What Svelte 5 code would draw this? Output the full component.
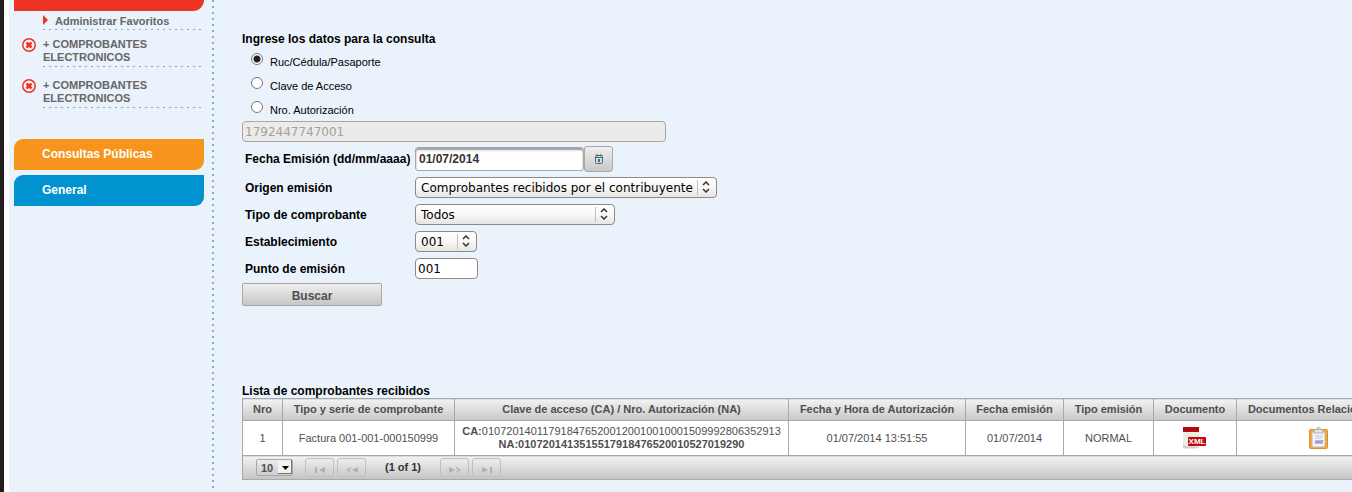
<script>
    let searchBy = 'ruc';
    let ruc = '1792447747001';
    let issueDate = '01/07/2014';
    let emissionPoint = '001';

    const favorites = [
        { id: 1, title: '+ COMPROBANTES ELECTRONICOS' },
        { id: 2, title: '+ COMPROBANTES ELECTRONICOS' },
    ];

    const searchOptions = [
        { value: 'ruc', display: 'Ruc/Cédula/Pasaporte' },
        { value: 'clave', display: 'Clave de Acceso' },
        { value: 'autorizacion', display: 'Nro. Autorización' },
    ];

    const columns = [
        { display: 'Nro', width: 40 },
        { display: 'Tipo y serie de comprobante', width: 172 },
        { display: 'Clave de acceso (CA) / Nro. Autorización (NA)', width: 334 },
        { display: 'Fecha y Hora de Autorización', width: 177 },
        { display: 'Fecha emisión', width: 98 },
        { display: 'Tipo emisión', width: 90 },
        { display: 'Documento', width: 83 },
        { display: 'Documentos Relacionados', width: 164 },
    ];

    const receipts = [
        {
            nro: 1,
            serie: 'Factura 001-001-000150999',
            ca: '0107201401179184765200120010010001509992806352913',
            na: '0107201413515517918476520010527019290',
            authorized: '01/07/2014 13:51:55',
            issued: '01/07/2014',
            type: 'NORMAL',
        },
    ];
</script>

<div class="page">
    <aside class="sidebar">
        <div class="tab red"></div>
        <ul class="favorites">
            <li class="manage"><a href="#favoritos">Administrar Favoritos</a></li>
            {#each favorites as favorite (favorite.id)}
                <li class="favorite">
                    <button class="remove" aria-label="Quitar favorito">
                        <svg width="14" height="14" viewBox="0 0 14 14">
                            <circle cx="7" cy="7" r="6.2" fill="#fff" stroke="#ee3224" stroke-width="1.5" />
                            <path d="M4.5 4.5l5 5M9.5 4.5l-5 5" stroke="#ee3224" stroke-width="2.6" />
                        </svg>
                    </button>
                    <a href="#comprobantes">{favorite.title}</a>
                </li>
            {/each}
        </ul>
        <nav>
            <a class="tab orange" href="#consultas">Consultas Públicas</a>
            <a class="tab blue" href="#general">General</a>
        </nav>
    </aside>

    <main>
        <form on:submit|preventDefault>
            <fieldset>
                <legend>Ingrese los datos para la consulta</legend>
                {#each searchOptions as option}
                    <label class="option">
                        <input type="radio" name="searchBy" value={option.value} bind:group={searchBy} />
                        <span>{option.display}</span>
                    </label>
                {/each}
            </fieldset>
            <input class="text ruc" aria-label="Ruc/Cédula/Pasaporte" bind:value={ruc} disabled />

            <div class="fields">
                <label for="fecha">Fecha Emisión (dd/mm/aaaa)</label>
                <div class="date">
                    <input id="fecha" bind:value={issueDate} />
                    <button type="button" aria-label="Abrir calendario">
                        <svg width="8" height="10" viewBox="0 0 8 10">
                            <path d="M0.5 2.5v6q0 1 1 1h5q1 0 1-1v-6q0-1-1-1h-5q-1 0-1 1zM2 0v2.5M6 0v2.5M1 3.5h6" fill="none" stroke="#3f6b80" />
                            <rect x="3" y="5" width="2" height="3" fill="#3f6b80" />
                        </svg>
                    </button>
                </div>

                <label for="origen">Origen emisión</label>
                <div class="select origen">
                    <select id="origen">
                        <option>Comprobantes recibidos por el contribuyente</option>
                    </select>
                    <svg width="8" height="12" viewBox="0 0 8 12"><path d="M1 4l3-3 3 3M1 8l3 3 3-3" /></svg>
                </div>

                <label for="tipo">Tipo de comprobante</label>
                <div class="select tipo">
                    <select id="tipo">
                        <option>Todos</option>
                    </select>
                    <svg width="8" height="12" viewBox="0 0 8 12"><path d="M1 4l3-3 3 3M1 8l3 3 3-3" /></svg>
                </div>

                <label for="establecimiento">Establecimiento</label>
                <div class="select establecimiento">
                    <select id="establecimiento">
                        <option>001</option>
                    </select>
                    <svg width="8" height="12" viewBox="0 0 8 12"><path d="M1 4l3-3 3 3M1 8l3 3 3-3" /></svg>
                </div>

                <label for="punto">Punto de emisión</label>
                <input class="text punto" id="punto" bind:value={emissionPoint} />
            </div>
            <button class="search">Buscar</button>
        </form>

        <h2>Lista de comprobantes recibidos</h2>
        <table>
            <colgroup>
                {#each columns as column}
                    <col style="width: {column.width}px" />
                {/each}
            </colgroup>
            <thead>
                <tr>
                    {#each columns as column}
                        <th>{column.display}</th>
                    {/each}
                </tr>
            </thead>
            <tbody>
                {#each receipts as receipt}
                    <tr>
                        <td>{receipt.nro}</td>
                        <td>{receipt.serie}</td>
                        <td>
                            <b>CA:</b>{receipt.ca}<br />
                            <b>NA:{receipt.na}</b>
                        </td>
                        <td>{receipt.authorized}</td>
                        <td>{receipt.issued}</td>
                        <td>{receipt.type}</td>
                        <td>
                            <a href="#xml" aria-label="Descargar XML">
                                <svg width="24" height="22" viewBox="0 0 24 22">
                                    <path d="M0 5h16v14q-4 0-6 2q-3-1-10 0z" fill="#efece0" />
                                    <path d="M0 18q5 2 8 1l8 1v1q-8 1-16 0z" fill="#cfd2cb" />
                                    <path d="M0 0h16v5H0z" fill="#b50d12" />
                                    <path d="M0 1h16M0 3h16" stroke="#96090d" stroke-dasharray="2 1" />
                                    <rect x="5" y="10" width="18" height="9" rx="1" fill="#c40812" />
                                    <text x="14" y="17" text-anchor="middle">XML</text>
                                </svg>
                            </a>
                        </td>
                        <td>
                            <a href="#relacionados" aria-label="Documentos relacionados">
                                <svg width="20" height="24" viewBox="0 0 20 24">
                                    <rect x="0.5" y="3.5" width="18" height="19" rx="1" fill="#f5a632" stroke="#dc9028" />
                                    <path d="M3 6h13v15H3z" fill="#f2f3fb" stroke="#c9b792" />
                                    <path d="M5 7v-3h2l1-2q1.500-1 3 0l1 2h2v3z" fill="#e3e6e4" stroke="#a9b3ad" />
                                    <path d="M9 3h1v1H9z" fill="#555" />
                                    <path d="M6 10h8M6 12h7" stroke="#bfc3e6" />
                                    <path d="M6 14h8v4H6z" fill="#b6b3e2" />
                                    <path d="M6 17l3-2 2 2 3-3" fill="none" stroke="#8c89ca" />
                                </svg>
                            </a>
                        </td>
                    </tr>
                {/each}
            </tbody>
            <tfoot>
                <tr>
                    <td colspan={columns.length}>
                        <div class="paginator">
                            <div class="rows">
                                <select aria-label="Filas por página">
                                    <option>10</option>
                                </select>
                                <svg width="14" height="14" viewBox="0 0 14 14">
                                    <path d="M0 0h14v14H0z" fill="#f4f2ef" />
                                    <path d="M0 13.5h13.5V0" fill="none" stroke="#777" />
                                    <path d="M4 6h7l-3.500 4z" />
                                </svg>
                            </div>
                            <button class="pager" disabled aria-label="Primera">
                                <svg width="10" height="6" viewBox="0 0 10 6"><path d="M0 0h2v6H0zM10 0v6L4 3z" /></svg>
                            </button>
                            <button class="pager" disabled aria-label="Anterior">
                                <svg width="12" height="6" viewBox="0 0 12 6"><path d="M5 0v1.500L2 3l3 1.500V6L0 3zM12 0v6L6 3z" /></svg>
                            </button>
                            <span class="current">(1 of 1)</span>
                            <button class="pager" disabled aria-label="Siguiente">
                                <svg width="12" height="6" viewBox="0 0 12 6"><path d="M0 0v6l6-3zM7 0v1.500L10 3 7 4.500V6l5-3z" /></svg>
                            </button>
                            <button class="pager" disabled aria-label="Última">
                                <svg width="10" height="6" viewBox="0 0 10 6"><path d="M0 0v6l6-3zM8 0h2v6H8z" /></svg>
                            </button>
                        </div>
                    </td>
                </tr>
            </tfoot>
        </table>
    </main>
</div>

<style>
    :global(body) {
        background-color: #eaf3fb;
    }

    .page {
        display: flex;
        min-height: 100vh;
        overflow: hidden;
        box-sizing: border-box;
        border-left: 4px solid #231f20;
        font-family: 'Liberation Sans', Arial, sans-serif;
        font-size: 11px;
        color: #000;
    }

    a {
        color: inherit;
        text-decoration: none;
    }

    button,
    input,
    select {
        box-sizing: border-box;
        margin: 0;
        font-family: inherit;
        font-size: inherit;
    }

    .sidebar {
        flex: none;
        width: 210px;
        box-sizing: border-box;
        padding: 0 10px 0 5px;
        border-left: 5px solid #fff;
        background: linear-gradient(#84aed2 2px, transparent 2px) right 0 top 0 / 2px 6px repeat-y;
    }

    .tab {
        display: block;
        box-sizing: border-box;
        height: 31px;
        margin: 0 0 5px;
        padding: 0 28px;
        border-radius: 9px 0;
        font-weight: bold;
        font-size: 12px;
        line-height: 31px;
        color: #fff;
    }

    .red {
        height: 11px;
        margin: 0;
        border-radius: 0 0 11px;
        background-color: #ee3224;
    }

    .orange {
        background-color: #f7941e;
    }

    .blue {
        background-color: #0093d0;
    }

    .favorites {
        margin: 0 0 31px;
        padding: 0;
        list-style: none;
        font-weight: bold;
        line-height: 13px;
        color: #666;
    }

    .manage,
    .favorite a {
        background: linear-gradient(90deg, #7fa9d2 2px, transparent 2px) left bottom / 6px 1px repeat-x;
    }

    .manage {
        position: relative;
        margin-left: 29px;
        padding: 4px 0 2px 12px;
    }

    .manage::before {
        position: absolute;
        top: 4px;
        left: 0;
        border: solid transparent;
        border-width: 5px 0 5px 5px;
        border-left-color: #ee3224;
        content: '';
    }

    .favorite {
        display: flex;
        gap: 7px;
        padding: 8px 0 0 8px;
    }

    .favorite a {
        flex: 1;
        padding-bottom: 3px;
    }

    .favorite + .favorite {
        padding-top: 12px;
    }

    .remove {
        flex: none;
        height: 14px;
        padding: 0;
        border: 0;
        background: none;
    }

    .remove svg {
        display: block;
    }

    main {
        flex: 1;
        min-width: 0;
        padding: 32px 0 0 28px;
    }

    fieldset {
        margin: 0;
        padding: 0;
        border: 0;
    }

    legend {
        padding: 0;
        font-weight: bold;
        font-size: 12px;
        line-height: 14px;
    }

    .option {
        display: flex;
        align-items: flex-start;
        gap: 7px;
        height: 24px;
        padding-left: 9px;
    }

    .option span {
        padding-top: 10px;
        line-height: 13px;
    }

    input[type='radio'] {
        width: 12px;
        height: 12px;
        margin-top: 7px;
        border: 1px solid #777;
        border-radius: 50%;
        background-color: #fff;
        appearance: none;
    }

    input[type='radio']:checked {
        background-image: radial-gradient(circle, #222 3px, transparent 4px);
    }

    .text,
    .select select {
        height: 21px;
        border: 1px solid #8e8a86;
        border-radius: 4px;
        background-color: #fff;
        font-family: 'DejaVu Sans', sans-serif;
        font-size: 12px;
        color: #000;
    }

    .text {
        display: block;
        padding: 0 2px;
    }

    .ruc {
        width: 424px;
        margin-top: 3px;
        background-color: #edebe9;
        border-color: #aaa6a2;
        color: #a3a09d;
    }

    .fields {
        display: grid;
        grid-template-columns: 170px max-content;
        grid-template-rows: 24px;
        grid-auto-rows: 21px;
        row-gap: 6px;
        align-items: center;
        padding: 5px 0 0 3px;
    }

    .fields label {
        font-weight: bold;
        font-size: 12px;
        white-space: nowrap;
    }

    .date {
        display: flex;
        align-items: center;
    }

    .date input {
        width: 169px;
        height: 24px;
        padding: 0 3px;
        border: 1px solid #a8a8a8;
        border-radius: 3px;
        box-shadow: inset 0 2px 2px #999;
        font-weight: bold;
        font-size: 12px;
        color: #333;
    }

    .date button {
        display: flex;
        align-items: center;
        justify-content: center;
        width: 29px;
        height: 26px;
        padding: 0;
        border: 1px solid #a8a8a8;
        border-radius: 3px;
        background: linear-gradient(#efefef, #c8c8c8);
    }

    .select {
        position: relative;
    }

    .select select {
        display: block;
        width: 100%;
        padding: 0 20px 0 5px;
        background: linear-gradient(#fff, #f8f7f6 50%, #e8e6e4);
        appearance: none;
    }

    .select::after {
        position: absolute;
        top: 3px;
        right: 19px;
        width: 1px;
        height: 15px;
        background-color: #c4c0bc;
        content: '';
    }

    .select svg {
        position: absolute;
        top: 4px;
        right: 7px;
        fill: none;
        stroke: #333;
        stroke-width: 1.5;
        pointer-events: none;
    }

    .origen {
        width: 302px;
    }

    .tipo {
        width: 200px;
    }

    .establecimiento {
        width: 62px;
    }

    .punto {
        width: 63px;
    }

    .search {
        display: block;
        width: 140px;
        height: 23px;
        margin-top: 4px;
        padding: 3px 0 0;
        border: 1px solid #a8a8a8;
        border-radius: 2px;
        background: linear-gradient(#efefef, #c6c6c6);
        font-weight: bold;
        font-size: 12px;
        color: #4f4f4f;
    }

    h2 {
        margin: 78px 0 0;
        font-size: 12px;
        line-height: 14px;
    }

    table {
        width: 1158px;
        border-collapse: collapse;
        table-layout: fixed;
        color: #4f4f4f;
    }

    th,
    td {
        padding: 0;
        border: 1px solid #a8a8a8;
        line-height: 13px;
        text-align: center;
        white-space: nowrap;
    }

    th {
        height: 21px;
        background: linear-gradient(#f2f2f2, #c8c8c8);
    }

    tbody td {
        height: 34px;
        background-color: #fff;
    }

    td svg {
        display: block;
        margin: 0 auto;
    }

    text {
        font-weight: bold;
        font-size: 8px;
        fill: #fff;
    }

    tfoot td {
        background: linear-gradient(#f2f2f2, #c4c4c4);
    }

    .paginator {
        display: flex;
        align-items: center;
        gap: 3px;
        height: 23px;
        padding-left: 13px;
    }

    .rows {
        position: relative;
        margin-right: 9px;
    }

    .rows select {
        display: block;
        width: 37px;
        height: 17px;
        padding: 0 0 0 4px;
        border: 1px solid #a8a8a8;
        border-radius: 2px;
        background: none;
        font-weight: bold;
        color: #4f4f4f;
        appearance: none;
    }

    .rows svg {
        position: absolute;
        top: 1px;
        right: 1px;
        pointer-events: none;
    }

    .pager {
        width: 29px;
        height: 19px;
        padding: 4px 0 0;
        border: 1px solid #c0c0c0;
        border-radius: 3px;
        background: none;
    }

    .pager svg {
        fill: #a3b3bb;
    }

    .current {
        width: 68px;
        font-weight: bold;
        color: #333;
    }
</style>
